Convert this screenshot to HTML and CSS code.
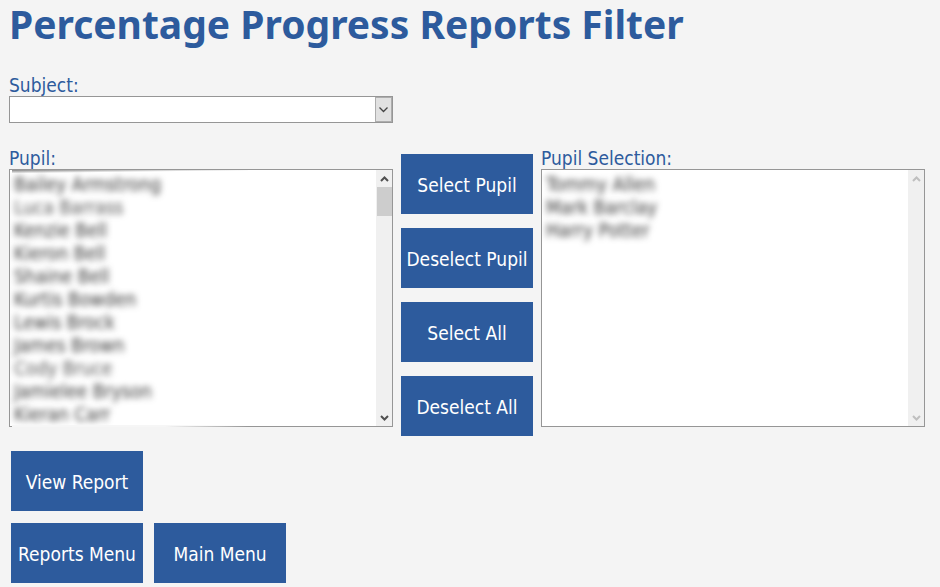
FILE: index.html
```
<!DOCTYPE html>
<html lang="en">
<head>
    <meta charset="UTF-8">
    <meta name="viewport" content="width=device-width, initial-scale=1.0">
    <title>Percentage Progress Reports Filter</title>
    <link rel="stylesheet" href="styles.css">
</head>
<body>
    <h1>Percentage Progress Reports Filter</h1>
    <form class="filter">
        <div class="field subject">
            <label for="subject">Subject:</label>
            <div class="dropdown">
                <select id="subject">
                    <option value=""></option>
                </select>
                <span class="arrow">
                    <svg width="9" height="6" viewBox="0 0 9 6"><path d="M0.5 0.5 L4.5 4.5 L8.5 0.5"/></svg>
                </span>
            </div>
        </div>

        <div class="field pupils">
            <label for="pupil">Pupil:</label>
            <div class="listbox smudged">
                <select id="pupil" size="11" multiple>
                    <option>Bailey Armstrong</option>
                    <option class="light">Luca Barrass</option>
                    <option>Kenzie Bell</option>
                    <option>Kieron Bell</option>
                    <option>Shaine Bell</option>
                    <option>Kurtis Bowden</option>
                    <option>Lewis Brock</option>
                    <option>James Brown</option>
                    <option class="light">Cody Bruce</option>
                    <option>Jamielee Bryson</option>
                    <option>Kieran Carr</option>
                </select>
                <div class="scrollbar">
                    <svg width="9" height="6" viewBox="0 0 9 6"><path d="M1 5 L4.5 1.5 L8 5"/></svg>
                    <span class="thumb"></span>
                    <svg width="9" height="6" viewBox="0 0 9 6"><path d="M1 1 L4.5 4.5 L8 1"/></svg>
                </div>
            </div>
        </div>

        <div class="actions">
            <button type="button">Select Pupil</button>
            <button type="button">Deselect Pupil</button>
            <button type="button">Select All</button>
            <button type="button">Deselect All</button>
        </div>

        <div class="field selection">
            <label for="selected">Pupil Selection:</label>
            <div class="listbox">
                <select id="selected" size="11" multiple>
                    <option>Tommy Allen</option>
                    <option>Mark Barclay</option>
                    <option>Harry Potter</option>
                </select>
                <div class="scrollbar disabled">
                    <svg width="9" height="6" viewBox="0 0 9 6"><path d="M1 5 L4.5 1.5 L8 5"/></svg>
                    <svg width="9" height="6" viewBox="0 0 9 6"><path d="M1 1 L4.5 4.5 L8 1"/></svg>
                </div>
            </div>
        </div>
    </form>

    <div class="menu">
        <div class="row">
            <button type="button">View Report</button>
        </div>
        <div class="row">
            <button type="button">Reports Menu</button>
            <button type="button">Main Menu</button>
        </div>
    </div>
</body>
</html>
```

FILE: styles.css
```
* {
    box-sizing: border-box;
}
body {
    margin: 0;
    padding: 0 15px 4px 9px;
    background: #f4f4f4;
    color: #2d5b9d;
    font-family: Tahoma, "DejaVu Sans Condensed", "DejaVu Sans", sans-serif;
    font-size: 19px;
    line-height: 23px;
}
h1 {
    margin: 0;
    font-family: Tahoma, "Noto Sans", sans-serif;
    font-size: 39px;
    line-height: 48px;
    font-weight: bold;
}
.filter {
    display: grid;
    grid-template-columns: 1fr 132px 1fr;
    column-gap: 8px;
    row-gap: 21px;
    margin-top: 23px;
}
.field {
    display: flex;
    flex-direction: column;
}
label {
    padding-top: 3px;
    line-height: 22px;
}
.subject {
    grid-column: 1 / 2;
}
.pupils {
    grid-column: 1;
}
select {
    width: 100%;
    margin: 0;
    border: none;
    border-radius: 0;
    background: white;
    color: black;
    font: inherit;
    outline: none;
    appearance: none;
}
.dropdown {
    position: relative;
    display: flex;
    border: 1px solid #969696;
}
.dropdown select {
    height: 25px;
    padding: 0 20px 0 4px;
}
.arrow {
    position: absolute;
    top: 0;
    right: 0;
    bottom: 0;
    width: 17px;
    display: flex;
    align-items: center;
    justify-content: center;
    background: #e1e1e1;
    border: 1px solid #adadad;
    pointer-events: none;
}
svg {
    display: block;
    fill: none;
    stroke: #444;
    stroke-width: 1.3;
}
.listbox {
    position: relative;
    display: flex;
    height: 258px;
    border: 1px solid #969696;
    background: white;
}
.listbox select {
    flex: 1;
    min-width: 0;
    height: 256px;
    padding: 3px 0 0 2px;
    overflow: hidden;
}
option {
    min-height: 23px;
    padding: 0 2px;
    line-height: 23px;
    color: #333;
}
.listbox option {
    filter: blur(3px);
}
.listbox .light {
    color: #555;
}
/* blurring spills over the edges of the list */
.smudged::before,
.smudged::after {
    content: "";
    position: absolute;
    left: 2px;
    width: 236px;
}
.smudged::before {
    top: 0;
    height: 3px;
    background: linear-gradient(to bottom right, #888, #fff 60%);
}
.smudged::after {
    bottom: -1px;
    height: 2px;
    background: linear-gradient(to right, #f6f6f6 65%, transparent);
}
.scrollbar {
    width: 16px;
    display: flex;
    flex-direction: column;
    align-items: center;
    padding: 6px 0 5px;
    background: #f0f0f0;
}
.scrollbar svg {
    stroke: #505050;
    stroke-width: 2;
}
.scrollbar svg:last-child {
    margin-top: auto;
}
.scrollbar.disabled svg {
    stroke: #bfbfbf;
}
.thumb {
    width: 15px;
    height: 29px;
    margin-top: 5px;
    background: #cdcdcd;
}
.actions {
    display: flex;
    flex-direction: column;
    gap: 14px;
    margin-top: 10px;
}
button {
    width: 132px;
    height: 60px;
    padding: 2px 0 0;
    border: none;
    background: #2d5b9d;
    color: white;
    font: inherit;
    white-space: nowrap;
    cursor: pointer;
}
button:hover {
    background: #244a80;
}
.menu {
    display: flex;
    flex-direction: column;
    gap: 12px;
    padding: 15px 2px 0;
}
.row {
    display: flex;
    gap: 11px;
}
```
